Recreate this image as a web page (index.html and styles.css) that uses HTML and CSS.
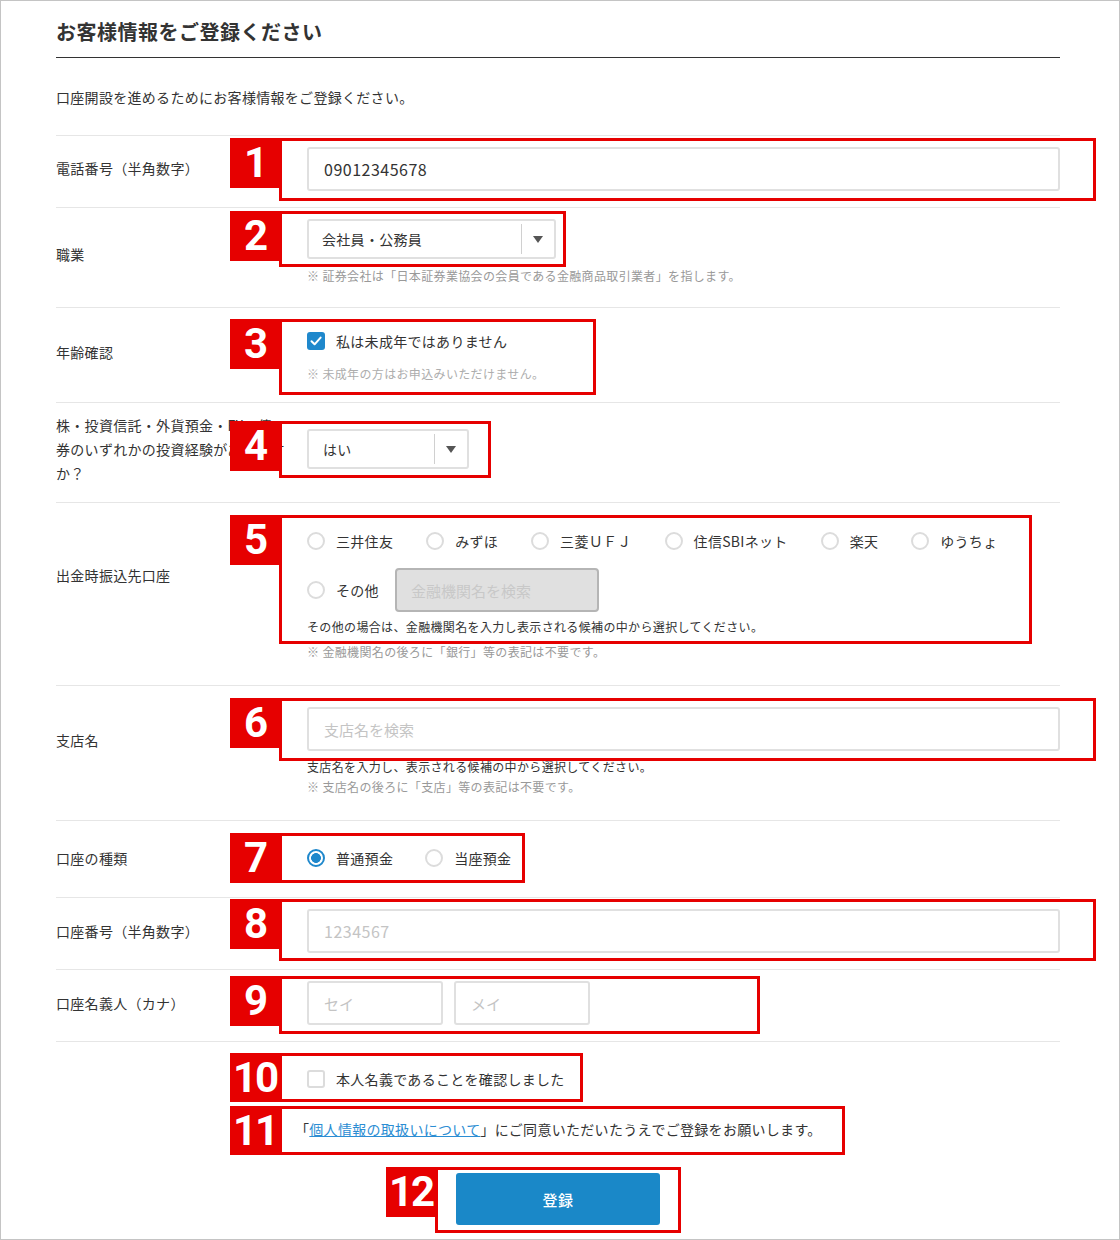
FILE: index.html
```html
<!DOCTYPE html>
<html lang="ja">
<head>
<meta charset="utf-8">
<title>お客様情報のご登録</title>
<link rel="stylesheet" href="styles.css">
</head>
<body>
<div class="frame">
<main class="page">
  <h1 class="title">お客様情報をご登録ください</h1>
  <p class="intro">口座開設を進めるためにお客様情報をご登録ください。</p>

  <div class="row row-tel">
    <div class="label">電話番号（半角数字）</div>
    <div class="field">
      <div class="anchor">
        <input class="text-input" type="text" value="09012345678">
        <span class="mark mark-1"><span class="badge">1</span></span>
      </div>
    </div>
  </div>

  <div class="row row-job">
    <div class="label">職業</div>
    <div class="field">
      <div class="anchor select-job">
        <div class="select"><span class="select-value">会社員・公務員</span><span class="select-arrow"></span></div>
        <span class="mark mark-2"><span class="badge">2</span></span>
      </div>
      <p class="note">※ 証券会社は「日本証券業協会の会員である金融商品取引業者」を指します。</p>
    </div>
  </div>

  <div class="row row-age">
    <div class="label">年齢確認</div>
    <div class="field">
      <div class="anchor">
        <div class="check">
          <span class="checkbox is-checked"><svg viewBox="0 0 18 18" width="18" height="18"><rect width="18" height="18" rx="3" fill="#1f88cc"/><polyline points="4.5,9.2 7.6,12.3 13.6,5.6" fill="none" stroke="#fff" stroke-width="2" stroke-linecap="round" stroke-linejoin="round"/></svg></span>
          <span>私は未成年ではありません</span>
        </div>
        <p class="note note-light">※ 未成年の方はお申込みいただけません。</p>
        <span class="mark mark-3"><span class="badge">3</span></span>
      </div>
    </div>
  </div>

  <div class="row row-exp">
    <div class="label">株・投資信託・外貨預金・FX・債<br>券のいずれかの投資経験があります<br>か？</div>
    <div class="field">
      <div class="anchor select-exp">
        <div class="select"><span class="select-value">はい</span><span class="select-arrow"></span></div>
        <span class="mark mark-4"><span class="badge">4</span></span>
      </div>
    </div>
  </div>

  <div class="row row-bank">
    <div class="label">出金時振込先口座</div>
    <div class="field">
      <div class="anchor">
        <div class="radios">
          <span class="radio"><span class="radio-dot"></span>三井住友</span>
          <span class="radio"><span class="radio-dot"></span>みずほ</span>
          <span class="radio"><span class="radio-dot"></span>三菱ＵＦＪ</span>
          <span class="radio"><span class="radio-dot"></span>住信SBIネット</span>
          <span class="radio"><span class="radio-dot"></span>楽天</span>
          <span class="radio"><span class="radio-dot"></span>ゆうちょ</span>
        </div>
        <div class="radios radios-other">
          <span class="radio"><span class="radio-dot"></span>その他</span>
          <input class="text-input ja bank-search" type="text" placeholder="金融機関名を検索" disabled>
        </div>
        <p class="help">その他の場合は、金融機関名を入力し表示される候補の中から選択してください。</p>
        <span class="mark mark-5"><span class="badge">5</span></span>
      </div>
      <p class="note">※ 金融機関名の後ろに「銀行」等の表記は不要です。</p>
    </div>
  </div>

  <div class="row row-branch">
    <div class="label">支店名</div>
    <div class="field">
      <div class="anchor">
        <input class="text-input ja" type="text" placeholder="支店名を検索">
        <span class="mark mark-6"><span class="badge">6</span></span>
      </div>
      <p class="help">支店名を入力し、表示される候補の中から選択してください。</p>
      <p class="note">※ 支店名の後ろに「支店」等の表記は不要です。</p>
    </div>
  </div>

  <div class="row row-type">
    <div class="label">口座の種類</div>
    <div class="field">
      <div class="anchor">
        <div class="radios radios-tight">
          <span class="radio"><span class="radio-dot is-on"></span>普通預金</span>
          <span class="radio"><span class="radio-dot"></span>当座預金</span>
        </div>
        <span class="mark mark-7"><span class="badge">7</span></span>
      </div>
    </div>
  </div>

  <div class="row row-acct">
    <div class="label">口座番号（半角数字）</div>
    <div class="field">
      <div class="anchor">
        <input class="text-input" type="text" placeholder="1234567">
        <span class="mark mark-8"><span class="badge">8</span></span>
      </div>
    </div>
  </div>

  <div class="row row-name">
    <div class="label">口座名義人（カナ）</div>
    <div class="field">
      <div class="anchor name-pair">
        <input class="text-input ja name-input" type="text" placeholder="セイ">
        <input class="text-input ja name-input" type="text" placeholder="メイ">
        <span class="mark mark-9"><span class="badge">9</span></span>
      </div>
    </div>
  </div>

  <div class="confirm">
    <div class="confirm-fields">
      <div class="anchor">
        <div class="check check-tall">
          <span class="checkbox"></span>
          <span>本人名義であることを確認しました</span>
        </div>
        <span class="mark mark-10"><span class="badge">10</span></span>
      </div>
      <div class="anchor agree-wrap">
        <p class="agree">「<a href="#">個人情報の取扱いについて</a>」にご同意いただいたうえでご登録をお願いします。</p>
        <span class="mark mark-11"><span class="badge">11</span></span>
      </div>
    </div>
    <div class="submit">
      <div class="anchor">
        <button class="btn" type="button">登録</button>
        <span class="mark mark-12"><span class="badge">12</span></span>
      </div>
    </div>
  </div>
</main>
</div>
</body>
</html>
```
FILE: styles.css
```css
* { box-sizing: border-box; }

html, body {
  margin: 0;
  padding: 0;
  background: #fff;
}

body {
  font-family: "Noto Sans CJK JP", "Noto Sans", sans-serif;
  font-size: 14px;
  line-height: 24px;
  letter-spacing: 0.3px;
  color: #333;
}

.frame {
  width: 1120px;
  height: 1240px;
  border: 1px solid #c4c4c4;
  overflow: hidden;
}

.page {
  padding: 0 59px 0 55px;
}

.title {
  margin: 16px 0 0;
  padding-bottom: 10px;
  font-size: 20px;
  line-height: 30px;
  font-weight: 700;
  letter-spacing: 0.5px;
  color: #333;
  border-bottom: 1px solid #333;
}

.intro {
  margin: 27px 0 26px;
}

/* ---------- rows ---------- */
.row {
  display: grid;
  grid-template-columns: 251px 753px;
  align-items: start;
  border-top: 1px solid #e6e6e6;
}

.label { margin: 0; }

.row-tel   { padding: 11px 0 16px; align-items: center; }
.row-tel .label { margin-bottom: 3px; }
.row-job   { padding: 11px 0 22px; }
.row-job .label { margin-top: 23px; }
.row-age   { padding: 23px 0 19px; }
.row-age .label { margin-top: 9px; }
.row-exp   { padding: 10px 0 17px; align-items: center; }
.row-bank  { padding: 26px 0 24px; }
.row-bank .label { margin-top: 34px; }
.row-branch { padding: 21px 0 23px; }
.row-branch .label { margin-top: 21px; }
.row-type  { padding: 25px 0 27px; align-items: center; }
.row-acct  { padding: 11px 0 16px; align-items: center; }
.row-name  { padding: 11px 0 16px; align-items: center; }

.anchor { position: relative; }

/* ---------- inputs ---------- */
.text-input {
  display: block;
  width: 100%;
  height: 44px;
  margin: 0;
  padding: 0 15px;
  border: 2px solid #e0e0e0;
  border-radius: 3px;
  background: #fff;
  font-family: "Noto Sans CJK JP", "Noto Sans", sans-serif;
  font-size: 16px;
  letter-spacing: 0.5px;
  color: #333;
  outline: none;
}

.text-input::placeholder { color: #c4c4c4; }

.text-input.ja { font-size: 15px; letter-spacing: 0; }

.bank-search {
  width: 204px;
  padding-left: 14px;
  border-color: #b5b5b5;
  border-radius: 4px;
  background: #e0e0e0;
}
.bank-search::placeholder { color: #c8c8c8; }

.name-pair { display: flex; gap: 11px; }
.name-input { width: 136px; }

/* ---------- select ---------- */
.select {
  display: flex;
  align-items: center;
  height: 40px;
  border: 2px solid #e0e0e0;
  border-radius: 3px;
  background: #fff;
}
.select-job { width: 249px; }
.select-exp { width: 162px; }
.select-value { flex: 1; padding-left: 13px; }
.select-exp .select-value { padding-left: 14px; }

.select-arrow {
  display: flex;
  align-items: center;
  justify-content: center;
  width: 33px;
  align-self: stretch;
  margin: 3px 0;
  border-left: 1px solid #d0d0d0;
}
.select-arrow::before {
  content: "";
  border-left: 5px solid transparent;
  border-right: 5px solid transparent;
  border-top: 7px solid #555;
}

/* ---------- notes ---------- */
.note {
  margin: 8px 0 0;
  font-size: 12px;
  line-height: 18px;
  letter-spacing: 0.35px;
  color: #999;
}
.note-light { margin-top: 14px; color: #adadad; }

.help {
  margin: 6px 0 0;
  font-size: 12px;
  line-height: 18px;
  letter-spacing: 0.35px;
  color: #333;
}
.row-bank .note { margin-top: 7px; }
.row-branch .help { line-height: 20px; }
.row-branch .note { margin-top: 0; line-height: 20px; }

/* ---------- checkbox / radio ---------- */
.check {
  display: flex;
  align-items: center;
  gap: 11px;
  line-height: 20px;
}
.check-tall { line-height: 24px; }

.checkbox {
  display: block;
  width: 18px;
  height: 18px;
  flex: none;
  border: 2px solid #dcdcdc;
  border-radius: 3px;
  background: #fff;
}
.checkbox.is-checked { border: 0; }
.checkbox svg { display: block; }

.radios {
  display: flex;
  align-items: center;
  line-height: 24px;
}
.radios-other { margin-top: 15px; }

.radio {
  display: inline-flex;
  align-items: center;
  gap: 11px;
  margin-right: 33px;
}
.radios-other .radio { margin-right: 16px; }
.radios-tight .radio { margin-right: 32px; }

.radio-dot {
  display: block;
  width: 18px;
  height: 18px;
  flex: none;
  border: 2px solid #dcdcdc;
  border-radius: 50%;
  background: #fff;
}
.radio-dot.is-on {
  border-color: #1f88cc;
  background: radial-gradient(circle, #1f88cc 0 4.6px, #fff 5.2px);
}

/* ---------- confirm / submit ---------- */
.confirm {
  border-top: 1px solid #e6e6e6;
  padding-top: 25px;
}
.confirm-fields { padding-left: 251px; }

.agree-wrap { margin-top: 26px; }
.agree { margin: 0 0 0 -12px; }
.agree a { color: #2b8dd3; text-decoration: underline; }

.submit {
  display: flex;
  justify-content: center;
  margin-top: 32px;
}

.btn {
  display: block;
  width: 204px;
  height: 52px;
  border: 0;
  border-radius: 3px;
  background: #1a88c8;
  color: #fff;
  font-family: "Noto Sans CJK JP", "Noto Sans", sans-serif;
  font-size: 15px;
  font-weight: 500;
  letter-spacing: 0.5px;
}

/* ---------- annotation overlays ---------- */
.mark {
  position: absolute;
  left: -28px;
  border: 3px solid #e60000;
  pointer-events: none;
}
.badge {
  position: absolute;
  top: -3px;
  right: calc(100% + 2px);
  width: 50px;
  height: 50px;
  background: #e60000;
  color: #fff;
  font-family: Roboto, "Liberation Sans", sans-serif;
  font-weight: 700;
  font-size: 42px;
  line-height: 50px;
  letter-spacing: -2px;
  text-align: center;
}

.mark-1  { top: -9px;  width: 817px; height: 63px; }
.mark-2  { top: -8px;  width: 287px; height: 56px; }
.mark-3  { top: -12px; width: 317px; height: 76px; }
.mark-4  { top: -8px;  width: 212px; height: 57px; }
.mark-5  { top: -14px; width: 753px; height: 129px; }
.mark-6  { top: -9px;  width: 817px; height: 63px; }
.mark-7  { top: -13px; width: 246px; height: 50px; }
.mark-8  { top: -10px; width: 817px; height: 62px; }
.mark-9  { top: -5px;  width: 481px; height: 58px; }
.mark-10 { top: -14px; width: 304px; height: 49px; }
.mark-11 { top: -11px; width: 566px; height: 49px; }
.mark-12 { left: -21px; top: -6px; width: 246px; height: 66px; }
.mark-10 .badge, .mark-11 .badge { height: 49px; line-height: 49px; }
```
